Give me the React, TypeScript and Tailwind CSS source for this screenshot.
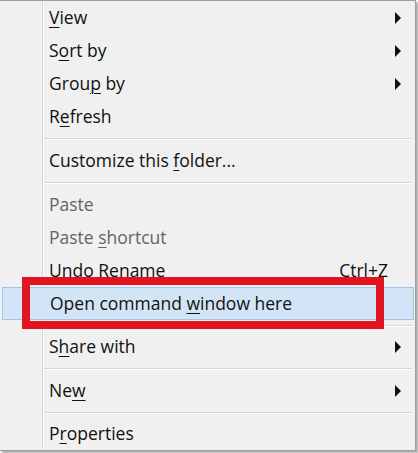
import React from 'react';

type Item =
  | { kind: 'sep'; h: number }
  | {
      kind: 'item';
      pre: string;
      key: string;
      post: string;
      arrow?: boolean;
      disabled?: boolean;
      shortcut?: string;
      active?: boolean;
    };

const items: Item[] = [
  { kind: 'item', pre: '', key: 'V', post: 'iew', arrow: true },
  { kind: 'item', pre: 'S', key: 'o', post: 'rt by', arrow: true },
  { kind: 'item', pre: 'Grou', key: 'p', post: ' by', arrow: true },
  { kind: 'item', pre: 'R', key: 'e', post: 'fresh' },
  { kind: 'sep', h: 11 },
  { kind: 'item', pre: 'Customize this ', key: 'f', post: 'older...' },
  { kind: 'sep', h: 11 },
  { kind: 'item', pre: 'Paste', key: '', post: '', disabled: true },
  { kind: 'item', pre: 'Paste ', key: 's', post: 'hortcut', disabled: true },
  { kind: 'item', pre: 'Undo Rename', key: '', post: '', shortcut: 'Ctrl+Z' },
  { kind: 'item', pre: 'Open command ', key: 'w', post: 'indow here', active: true },
  { kind: 'sep', h: 10 },
  { kind: 'item', pre: 'S', key: 'h', post: 'are with', arrow: true },
  { kind: 'sep', h: 11 },
  { kind: 'item', pre: 'Ne', key: 'w', post: '', arrow: true },
  { kind: 'sep', h: 10 },
  { kind: 'item', pre: 'P', key: 'r', post: 'operties' },
];

const Arrow = () => (
  <svg width="6" height="12" viewBox="0 0 6 12" className="block">
    <polygon points="0,0 6,6 0,12" fill="#111" />
  </svg>
);

const Gutter = () => (
  <div className="w-[43px] h-full shrink-0 border-r border-[#d5d5d5] shadow-[1px_0_0_#ffffff]" />
);

const ContextMenu = () => {
  return (
    <div className="relative w-[418px] h-[453px] bg-white overflow-hidden">
      <div
        className="w-[416px] h-[451px] bg-[#f0f0f0] border-t border-r border-b border-[#a0a0a0] shadow-[2px_2px_2px_rgba(0,0,0,0.35)] flex flex-col text-[17.5px] text-[#111]"
        style={{ fontFamily: '"Open Sans", "Noto Sans", sans-serif' }}
      >
        {items.map((it, i) => {
          if (it.kind === 'sep') {
            return (
              <div key={i} className="flex items-stretch" style={{ height: it.h }}>
                <Gutter />
                <div className="flex-1 flex items-center ml-[1px] mr-[2px]">
                  <div className="w-full h-[1px] bg-[#d7d7d7] shadow-[0_1px_0_#ffffff]" />
                </div>
              </div>
            );
          }
          const label = (
            <span className={it.disabled ? 'text-[#646464]' : ''}>
              {it.pre}
              {it.key && (
                <span className="underline underline-offset-[3px] decoration-1">{it.key}</span>
              )}
              {it.post}
            </span>
          );
          if (it.active) {
            return (
              <div key={i} className="h-[33px] flex items-stretch">
                <div className="flex-1 ml-[2px] mr-[1px] bg-[#d3e4f6] border border-[#a4c3e6] flex items-center pl-[47px] leading-none">
                  {label}
                </div>
              </div>
            );
          }
          return (
            <div key={i} className="h-[33px] flex items-stretch">
              <Gutter />
              <div className="flex-1 flex items-center justify-between pl-[6px] pr-[14px] leading-none">
                {label}
                {it.arrow && <Arrow />}
                {it.shortcut && <span className="mr-[13px]">{it.shortcut}</span>}
              </div>
            </div>
          );
        })}
      </div>
      {/* red highlight box */}
      <div className="absolute left-[22px] top-[277px] w-[362px] h-[52px] border-[8px] border-[#e1141f]" />
    </div>
  );
};

export default function App() {
  return <ContextMenu />;
}
